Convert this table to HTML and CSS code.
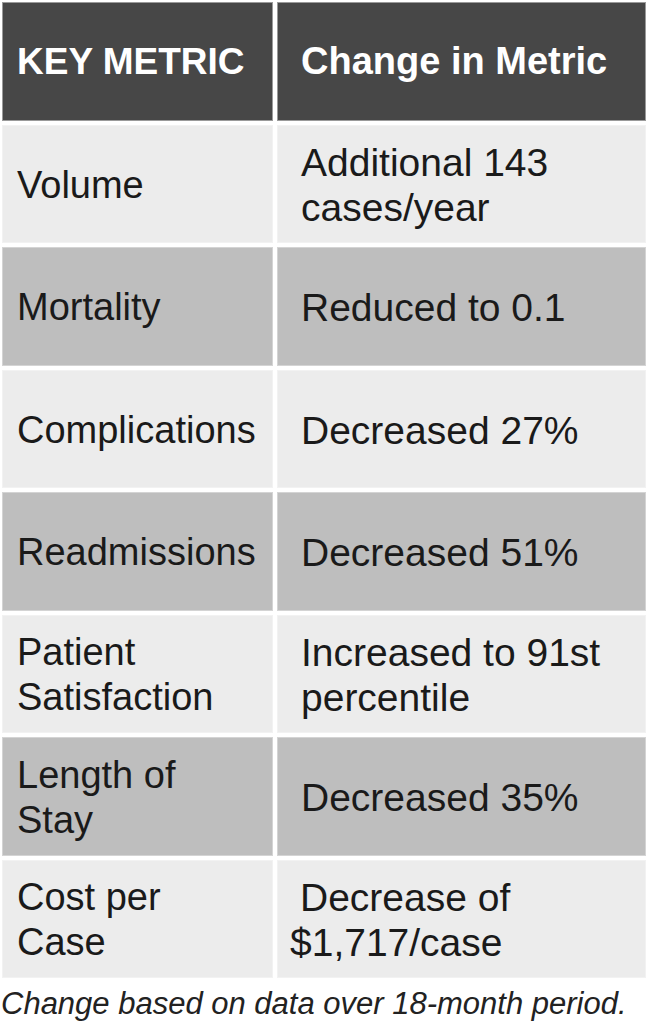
FILE: index.html
```html
<!DOCTYPE html>
<html lang="en">
<head>
<meta charset="utf-8">
<title>Key Metrics</title>
<link rel="stylesheet" href="styles.css">
</head>
<body>
<div class="metrics">
  <div class="cell head key">KEY METRIC</div>
  <div class="cell head val">Change in Metric</div>

  <div class="cell light key">Volume</div>
  <div class="cell light val">Additional 143<br>cases/year</div>

  <div class="cell mid key">Mortality</div>
  <div class="cell mid val">Reduced to 0.1</div>

  <div class="cell light key">Complications</div>
  <div class="cell light val">Decreased 27%</div>

  <div class="cell mid key">Readmissions</div>
  <div class="cell mid val">Decreased 51%</div>

  <div class="cell light key">Patient<br>Satisfaction</div>
  <div class="cell light val">Increased to 91st<br>percentile</div>

  <div class="cell mid key">Length of<br>Stay</div>
  <div class="cell mid val">Decreased 35%</div>

  <div class="cell light key">Cost per<br>Case</div>
  <div class="cell light val shifted"><span>Decrease of<br>$1,717/case</span></div>
</div>
<p class="caption">Change based on data over 18-month period.</p>
</body>
</html>
```

FILE: styles.css
```css
html, body {
  margin: 0;
  padding: 0;
  background: #ffffff;
}

body {
  width: 652px;
  font-family: "Liberation Sans", Arial, Helvetica, sans-serif;
  color: #1a1a1a;
}

.metrics {
  display: grid;
  grid-template-columns: 271px 369px;
  grid-auto-rows: 118.5px;
  column-gap: 4px;
  row-gap: 4px;
  padding: 2px 0 0 2px;
}

.cell {
  display: flex;
  align-items: center;
  box-sizing: border-box;
  font-size: 38px;
  line-height: 45px;
  padding-top: 3px;
  border: 1px solid rgba(255, 255, 255, 0.35);
}

.key {
  padding-left: 14px;
}

.val {
  padding-left: 23px;
  font-size: 39px;
}

.head {
  background: #474747;
  color: #ffffff;
  font-weight: bold;
  font-size: 37px;
  padding-top: 0;
  border-color: #9a9a9a;
}

.head.val {
  font-size: 38px;
}

.light {
  background: #ececec;
}

.mid {
  background: #bebebe;
}

.shifted {
  padding-left: 12px;
}

.shifted span {
  display: block;
  text-indent: 10px;
}

.caption {
  margin: 8px 0 0 1px;
  font-size: 31px;
  line-height: 35px;
  font-style: italic;
  color: #222222;
}
```
